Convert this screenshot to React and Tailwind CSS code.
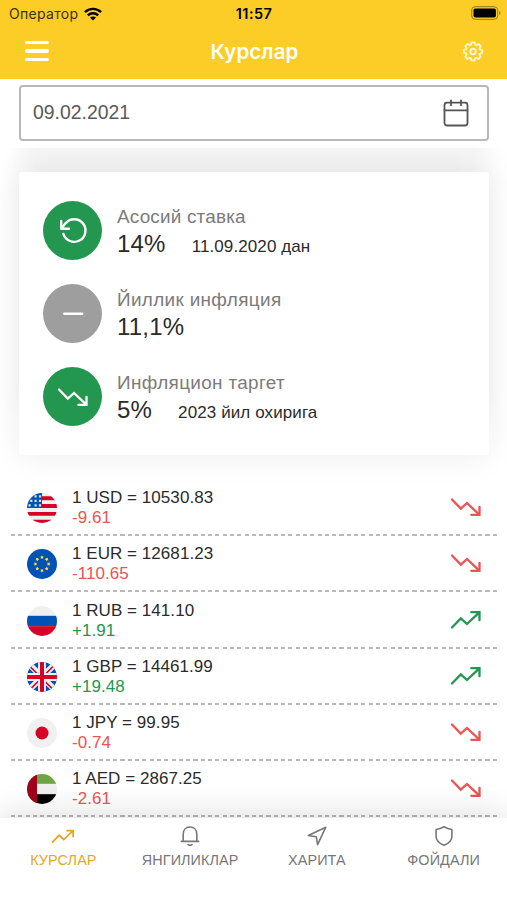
import clsx from 'clsx';

const indicators = [
  { icon: 'refresh', color: 'bg-[#23964f]', title: 'Асосий ставка', value: '14%', note: '11.09.2020 дан', tracking: 'tracking-[0.2px]' },
  { icon: 'minus', color: 'bg-[#9e9e9e]', title: 'Йиллик инфляция', value: '11,1%', tracking: 'tracking-[0.35px]' },
  { icon: 'down', color: 'bg-[#23964f]', title: 'Инфляцион таргет', value: '5%', note: '2023 йил охирига', tracking: 'tracking-[0.35px]' },
];

const rates = [
  { code: 'USD', rate: '10530.83', diff: '-9.61' },
  { code: 'EUR', rate: '12681.23', diff: '-110.65' },
  { code: 'RUB', rate: '141.10', diff: '+1.91' },
  { code: 'GBP', rate: '14461.99', diff: '+19.48' },
  { code: 'JPY', rate: '99.95', diff: '-0.74' },
  { code: 'AED', rate: '2867.25', diff: '-2.61' },
];

const tabs = [
  { id: 'rates', label: 'КУРСЛАР' },
  { id: 'news', label: 'ЯНГИЛИКЛАР' },
  { id: 'map', label: 'ХАРИТА' },
  { id: 'useful', label: 'ФОЙДАЛИ' },
];

function Trend({ up, className }) {
  return (
    <svg viewBox="0 0 32 20" fill="none" stroke="currentColor" strokeWidth="2.3" strokeLinecap="round" className={clsx(up && '-scale-y-100', className)}>
      <path d="M2 2.500L10.800 11.600l6.200-5.600L29.300 17.700M29.500 9.800v8h-8.200" />
    </svg>
  );
}

function IndicatorIcon({ name }) {
  if (name === 'down') return <Trend className="h-[20px] w-[32px] text-white" />;
  return (
    <svg viewBox="0 0 32 32" fill="none" stroke="white" strokeWidth="2.4" strokeLinecap="round" strokeLinejoin="round" className="size-8">
      {name === 'minus' ? (
        <path d="M7.200 15.800h18" />
      ) : (
        <path d="M4.200 6v7.700h7.700M4.700 13.200L8.700 8.100A11.300 11.300 0 1 1 6.400 18.900" />
      )}
    </svg>
  );
}

function Flag({ code }) {
  return (
    <svg viewBox="0 0 30 30" className="size-[30px] shrink-0 overflow-hidden rounded-full">
      {code === 'USD' && (
        <>
          <rect width="30" height="30" fill="#f0f0f0" />
          <path d="M14 5.200h16M14 13.050h16M0 20.900h30M0 28.700h30" stroke="#d80027" strokeWidth="3.9" />
          <rect width="15" height="15" fill="#0052b4" />
          <path d="M7.500 3.300h2.200M11.900 3.300h2.200M3.200 7.800h2.200M7.500 7.800h2.200M11.900 7.800h2.200M1.500 12.400h2.200M7.500 12.400h2.200M11.900 12.400h2.200" stroke="#d5e2f2" strokeWidth="2.200" />
        </>
      )}
      {code === 'EUR' && (
        <>
          <rect width="30" height="30" fill="#0052b4" />
          {[0, 45, 90, 135, 180, 225, 270, 315].map((a) => (
            <path key={a} transform={`rotate(${a} 15 15)`} d="M15 6.300l.6 1.200 1.400.2-1 .9.3 1.400-1.300-.7-1.300.7.3-1.400-1-.9 1.400-.2z" fill="#ffda44" />
          ))}
        </>
      )}
      {code === 'RUB' && (
        <>
          <rect width="30" height="30" fill="#f0f0f0" />
          <rect y="9.8" width="30" height="10.4" fill="#0052b4" />
          <rect y="20.2" width="30" height="10" fill="#d80027" />
        </>
      )}
      {code === 'GBP' && (
        <>
          <rect width="30" height="30" fill="#0052b4" />
          <path d="M0 0l30 30M30 0L0 30" stroke="#f0f0f0" strokeWidth="6" />
          <path d="M3 4.500l8 8M18 19.500l7 7M27 3.500l-8 8M12 18.500l-8 8" stroke="#d80027" strokeWidth="1.7" />
          <path d="M15 0v30M0 15h30" stroke="#f0f0f0" strokeWidth="7.8" />
          <path d="M15 0v30M0 15h30" stroke="#d80027" strokeWidth="4" />
        </>
      )}
      {code === 'JPY' && (
        <>
          <rect width="30" height="30" fill="#f0f0f0" />
          <circle cx="15" cy="15" r="6.500" fill="#d80027" />
        </>
      )}
      {code === 'AED' && (
        <>
          <rect width="30" height="30" fill="#f0f0f0" />
          <rect width="30" height="9.800" fill="#6da544" />
          <rect y="20.200" width="30" height="10" fill="#000" />
          <rect width="10" height="30" fill="#a2001d" />
        </>
      )}
    </svg>
  );
}

function TabIcon({ id }) {
  if (id === 'rates') return <Trend up className="h-[15px] w-6" />;
  return (
    <svg viewBox="0 0 24 24" fill="none" stroke="currentColor" strokeWidth="1.6" strokeLinecap="round" strokeLinejoin="round" className="size-6">
      {id === 'news' && <path d="M3.300 17.400h17.400M5.200 17.200V10c0-4.100 2.700-7 6.800-7s6.800 2.900 6.800 7v7.200M10 20.600c.8 1 3.200 1 4 0" />}
      {id === 'map' && <path d="M20.800 3.200L3.300 11.500l8 1.300 1.300 7.900z" />}
      {id === 'useful' && <path d="M12 2.800c2.700 1.700 5.100 2.400 7.900 2.700v6.900c0 4-3.400 7-7.900 8.900-4.500-1.900-7.900-4.900-7.900-8.900V5.500C6.900 5.200 9.300 4.500 12 2.800z" />}
    </svg>
  );
}

export default function App() {
  return (
    <div className="flex h-[900px] w-[507px] flex-col overflow-hidden bg-white font-['Liberation_Sans',Arial,sans-serif] text-[#2b2b2b]">
      <header className="h-[79px] shrink-0 bg-[#fccd27]">
        <div className="grid h-[27px] grid-cols-3 items-center pr-[6px] pl-[9px] font-['Inter',sans-serif] text-black">
          <div className="flex items-center gap-[6px] text-[14px] text-[#3a3010]">
            <span className="tracking-[0.3px]">Оператор</span>
            <svg viewBox="0 0 18 14" fill="none" stroke="black" strokeWidth="2.4" className="h-[14px] w-[18px]">
              <path d="M.9 5.100c4.600-4.300 11.600-4.300 16.200 0M3.800 8.300c3-2.800 7.400-2.800 10.400 0" />
              <path d="M9 13.500L5.900 10.500c1.800-1.500 4.400-1.500 6.200 0z" fill="black" stroke="none" />
            </svg>
          </div>
          <span className="pr-[2px] text-center text-[14.500px] font-semibold tracking-[0.4px]">11:57</span>
          <svg viewBox="0 0 30 14" className="-mt-px h-[14px] w-[30px] justify-self-end">
            <rect x=".7" y=".7" width="26" height="12.600" rx="3.500" fill="none" stroke="#8f7a25" />
            <rect x="2.500" y="2.500" width="22.400" height="9" rx="1.800" fill="black" />
            <path d="M28.200 4.900v4.200c1.700-.7 1.700-3.500 0-4.200z" fill="#8f7a25" />
          </svg>
        </div>
        <div className="grid h-[48px] grid-cols-3 items-center pr-[23px] pl-[25px] text-white">
          <button className="flex w-6 flex-col gap-[5px]">
            <span className="h-[3.500px] rounded-full bg-white" />
            <span className="h-[3.500px] rounded-full bg-white" />
            <span className="h-[3.500px] rounded-full bg-white" />
          </button>
          <h1 className="pt-[2px] text-center font-['Inter',sans-serif] text-[20.500px] font-semibold tracking-[0.1px]">Курслар</h1>
          <button className="justify-self-end">
            <svg viewBox="0 0 24 24" fill="none" stroke="currentColor" strokeWidth="2" strokeLinejoin="round" className="size-[22px] text-[#fff6cf]">
              <path d="M10.300 2.500h3.400l.6 2.700 1.500.6 2.300-1.500 2.400 2.400L19 9l.6 1.500 2.400.5v3.200l-2.500.6-.6 1.400 1.400 2.300-2.300 2.300-2.300-1.400-1.500.6-.5 2.400h-3.400l-.6-2.500-1.400-.6-2.300 1.400-2.400-2.300L5.100 16l-.6-1.500-2.500-.4v-3.300l2.500-.6.6-1.400-1.500-2.200 2.400-2.400 2.200 1.500 1.500-.6z" />
              <circle cx="12" cy="12.500" r="3" />
            </svg>
          </button>
        </div>
      </header>

      <div className="z-10 h-[69px] shrink-0 bg-white pt-[6px] pr-[18px] pl-[19px]">
        <div className="flex h-[56px] items-center justify-between rounded-[4px] border-2 border-[#b8b8b8] pr-[18px] pl-[12px]">
          <span className="text-[19.400px] text-[#5a5a5a]">09.02.2021</span>
          <svg viewBox="0 0 26 28" fill="none" stroke="#555" strokeWidth="1.800" strokeLinecap="round" className="h-7 w-[26px]">
            <rect x="1.500" y="3.700" width="23" height="22.800" rx="2.500" />
            <path d="M1.500 11.300h23M8 1.500v4.700M18 1.500v4.700" />
          </svg>
        </div>
      </div>

      <main className="flex-1">
        <section className="mx-[19px] mt-6 flex h-[283px] w-[470px] flex-col rounded-[3px] bg-white pt-[29px] pl-[24px] shadow-[0_0_34px_rgba(0,0,0,0.08),0_-48px_24px_rgba(0,0,0,0.045)]">
          {indicators.map((item) => (
            <div key={item.title} className="flex h-[83px] items-start">
              <div className={clsx('flex size-[59px] shrink-0 items-center justify-center rounded-full', item.color)}>
                <IndicatorIcon name={item.icon} />
              </div>
              <div className="ml-[15px] pt-[4px]">
                <p className={clsx('text-[18.900px] leading-6 text-[#7b7b7b]', item.tracking)}>{item.title}</p>
                <p className="-mt-px flex items-baseline leading-8">
                  <span className="text-[24px] tracking-[0.2px]">{item.value}</span>
                  {item.note && <span className="ml-[26px] text-[17px] tracking-[0.1px]">{item.note}</span>}
                </p>
              </div>
            </div>
          ))}
        </section>

        <ul className="mt-6 pr-[10px] pl-[11px]">
          {rates.map((r) => {
            const up = r.diff.startsWith('+');
            return (
              <li key={r.code} className="h-[56.250px]">
                <div className="flex h-[55px] items-center pt-[3px] pr-[15px] pl-[16px]">
                  <Flag code={r.code} />
                  <div className="ml-[15px] flex-1 text-[17px] leading-5 tracking-[0.050px]">
                    <p>1 {r.code} = {r.rate}</p>
                    <p className={up ? 'text-[#23964f]' : 'text-[#e95454]'}>{r.diff}</p>
                  </div>
                  <Trend up={up} className={clsx('-mt-[2px] h-5 w-8', up ? 'text-[#23964f]' : 'text-[#e95454]')} />
                </div>
                <div className="h-[2px] bg-[repeating-linear-gradient(90deg,#b8b8b8_0_4px,transparent_4px_7.300px)]" />
              </li>
            );
          })}
        </ul>
      </main>

      <nav className="grid h-[82px] shrink-0 grid-cols-4 bg-white shadow-[0_0_36px_rgba(0,0,0,0.16)]">
        {tabs.map((tab, i) => (
          <button key={tab.id} className={clsx('flex flex-col items-center pt-[6px]', i === 0 ? 'text-[#e6a623]' : 'text-[#777]')}>
            <span className="flex h-6 items-center"><TabIcon id={tab.id} /></span>
            <span className="mt-[2px] text-[14.400px] leading-5 tracking-[0.100px]">{tab.label}</span>
          </button>
        ))}
      </nav>
    </div>
  );
}
